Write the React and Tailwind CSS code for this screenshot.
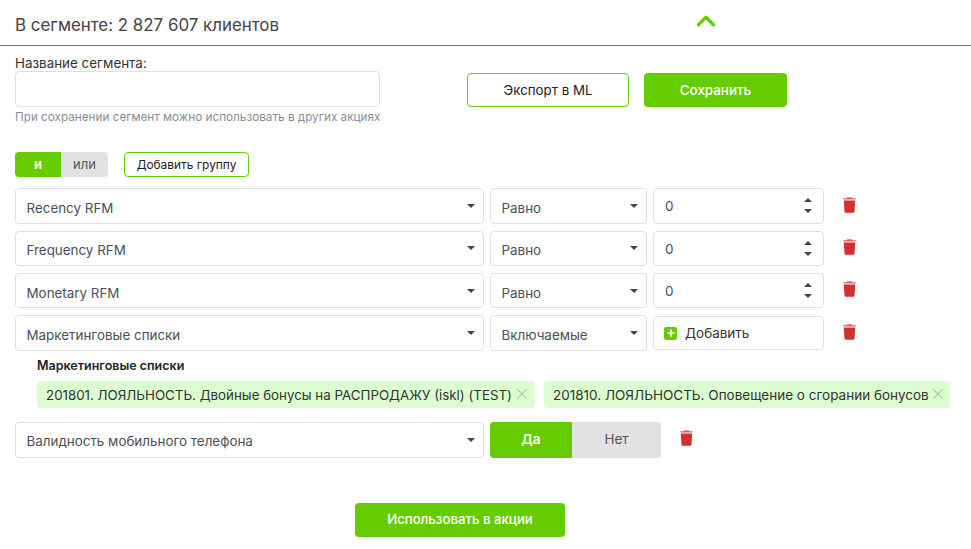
import React from 'react';
import { ChevronUp, Plus, X } from 'lucide-react';

const FONT = "font-['Inter','Noto_Sans',sans-serif]";

function Caret() {
  return <span className="block w-0 h-0 border-x-[4px] border-x-transparent border-t-[4px] border-t-[#444] shrink-0" />;
}

function Trash() {
  return (
    <svg viewBox="0 0 13 16" className="w-[13px] h-[16px] shrink-0" fill="#d32f2f">
      <path d="M4.2 0.2h4.6l0.5 1h3.4v1.4H0.3V1.2h3.4z" opacity="0.75" />
      <path d="M0.8 3.4h11.4l-0.7 11.4a1.2 1.2 0 0 1-1.2 1H2.7a1.2 1.2 0 0 1-1.2-1z" />
    </svg>
  );
}

function Select({ value, className }) {
  return (
    <div className={`h-[35.3px] flex items-center justify-between pl-[10.5px] pr-[8.5px] border border-[#dfdfdf] rounded-[4px] bg-white text-[13.4px] text-[#495057] ${className}`}>
      <span className="mt-[4px]">{value}</span>
      <Caret />
    </div>
  );
}

function NumberField() {
  return (
    <div className="w-[171px] h-[35.3px] flex items-center justify-between pl-[11px] pr-[11px] border border-[#dfdfdf] rounded-[4px] text-[13.5px] text-[#495057]">
      <span className="mt-[1px]">0</span>
      <span className="flex flex-col gap-[7px]">
        <span className="block w-0 h-0 border-x-[4px] border-x-transparent border-b-[4px] border-b-[#444]" />
        <span className="block w-0 h-0 border-x-[4px] border-x-transparent border-t-[4px] border-t-[#444]" />
      </span>
    </div>
  );
}

function Row({ field, op, last, className = '' }) {
  return (
    <div className={`flex items-start ${className}`}>
      <Select value={field} className="w-[469px]" />
      <Select value={op} className="w-[157px] ml-[6px]" />
      <div className="ml-[6px]">{last || <NumberField />}</div>
      <div className="ml-[18.5px] mt-[8.5px]"><Trash /></div>
    </div>
  );
}

function Chip({ text, className }) {
  return (
    <div className={`h-[27px] flex items-center justify-between pl-[9px] pr-[4px] bg-[#dcfdd0] rounded-[4px] text-[#333] whitespace-nowrap ${className}`}>
      <span className="mt-[3px]">{text}</span>
      <X className="w-[18px] h-[18px] shrink-0 text-[#a9b8a4]" strokeWidth={1.4} />
    </div>
  );
}

export default function App() {
  return (
    <div className={`${FONT} w-[971px] h-[549px] bg-white overflow-hidden`}>
      <div className="h-[46px] flex items-center pl-[15px] border-b border-[#707070] relative">
        <span className="mt-[6px] text-[16.9px] text-[#444]">В сегменте: 2 827 607 клиентов</span>
        <ChevronUp className="absolute left-[691px] top-[6px] w-[30px] h-[30px] text-[#66cc00]" strokeWidth={2.6} />
      </div>

      <div className="px-[15px]">
        <div className="flex items-start h-[84px]">
          <div className="w-[365px]">
            <div className="text-[13.4px] leading-[16px] text-[#333] mt-[9px]">Название сегмента:</div>
            <div className="h-[36px] border border-[#dfdfdf] rounded-[4px] bg-white" />
            <div className="text-[11.73px] leading-[15px] text-[#868e96] mt-[3px] whitespace-nowrap">При сохранении сегмент можно использовать в других акциях</div>
          </div>
          <button className="ml-[87px] mt-[27px] pt-[1px] w-[162px] h-[34px] border border-[#66cc00] rounded-[4px] text-[13.3px] text-[#222]">Экспорт в ML</button>
          <button className="ml-[15px] mt-[27px] pt-[1px] w-[143px] h-[34px] bg-[#66cc00] rounded-[4px] text-[13.4px] font-medium text-white">Сохранить</button>
        </div>

        <div className="flex items-center mt-[22px]">
          <div className="flex w-[93px] h-[25px] rounded-[4px] overflow-hidden text-[13px]">
            <div className="w-[46px] flex items-center justify-center bg-[#66cc00] text-white font-semibold">и</div>
            <div className="flex-1 flex items-center justify-center bg-[#e2e2e2] text-[#555]">или</div>
          </div>
          <button className="ml-[16px] w-[125px] h-[25px] border border-[#66cc00] rounded-[4px] text-[11.9px] text-[#222]">Добавить группу</button>
        </div>

        <Row field="Recency RFM" op="Равно" className="mt-[11.3px]" />
        <Row field="Frequency RFM" op="Равно" className="mt-[7.03px]" />
        <Row field="Monetary RFM" op="Равно" className="mt-[7.03px]" />
        <Row
          field="Маркетинговые списки"
          op="Включаемые"
          className="mt-[7.03px]"
          last={
            <div className="w-[171px] h-[34px] mt-[1px] flex items-center pl-[10px] border border-[#dfdfdf] rounded-[4px] text-[13.5px] text-[#333]">
              <span className="w-[13px] h-[13px] rounded-[2px] bg-[#66cc00] flex items-center justify-center mr-[8px]">
                <Plus className="w-[10px] h-[10px] text-white" strokeWidth={4} />
              </span>
              Добавить
            </div>
          }
        />

        <div className="ml-[22px] mt-[7px] text-[12.5px] leading-[16px] font-semibold text-[#222]">Маркетинговые списки</div>
        <div className="flex ml-[22px] mt-[7px] gap-[9px]">
          <Chip text="201801. ЛОЯЛЬНОСТЬ. Двойные бонусы на РАСПРОДАЖУ (iskl) (TEST)" className="w-[498px] text-[13.33px]" />
          <Chip text="201810. ЛОЯЛЬНОСТЬ. Оповещение о сгорании бонусов" className="w-[406px] text-[13.5px]" />
        </div>

        <div className="flex items-start mt-[14px]">
          <Select value="Валидность мобильного телефона" className="w-[469px] h-[36px]" />
          <div className="flex ml-[6px] w-[171px] h-[36px] rounded-[4px] overflow-hidden text-[13.5px]">
            <div className="w-[82px] flex items-center justify-center bg-[#66cc00] text-white font-semibold">Да</div>
            <div className="flex-1 flex items-center justify-center bg-[#e2e2e2] text-[#555]">Нет</div>
          </div>
          <div className="ml-[18.5px] mt-[8px]"><Trash /></div>
        </div>

        <div className="flex justify-center mt-[45px] w-[890px]">
          <button className="w-[210px] h-[34px] bg-[#66cc00] rounded-[4px] text-[13.2px] font-medium text-white">Использовать в акции</button>
        </div>
      </div>
    </div>
  );
}
